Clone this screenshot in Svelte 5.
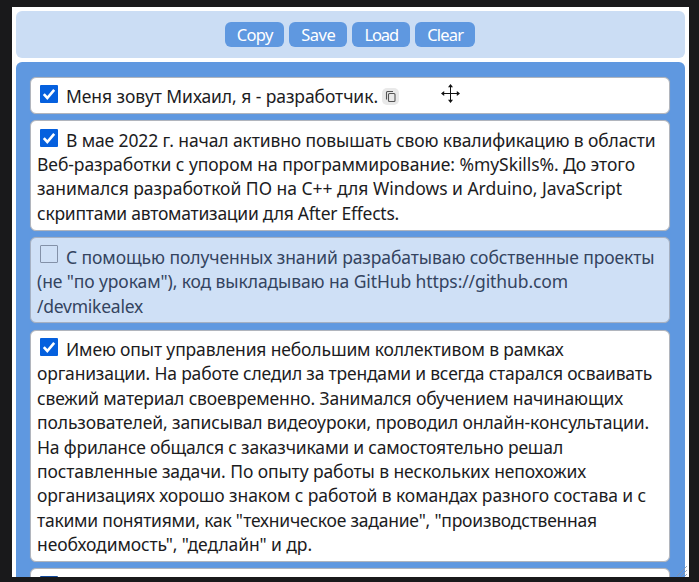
<script>
  const buttons = [
    { label: 'Copy', width: 59, text: 36 },
    { label: 'Save', width: 58, text: 34 },
    { label: 'Load', width: 58, text: 33.5 },
    { label: 'Clear', width: 60, text: 36 }
  ];

  // Each line carries its text and its measure in pixels.
  const items = [
    { checked: true, copy: true, height: 37.4, lines: [['Меня зовут Михаил, я - разработчик.', 312]] },
    {
      checked: true,
      height: 111,
      lines: [
        ['В мае 2022 г. начал активно повышать свою квалификацию в области', 589.5],
        ['Веб-разработки с упором на программирование: %mySkills%. До этого', 598],
        ['занимался разработкой ПО на C++ для Windows и Arduino, JavaScript', 585],
        ['скриптами автоматизации для After Effects.', 362]
      ]
    },
    {
      checked: false,
      height: 86,
      lines: [
        ['С помощью полученных знаний разрабатываю собственные проекты', 588.5],
        ['(не "по урокам"), код выкладываю на GitHub https://github.com', 531],
        ['/devmikealex', 106]
      ]
    },
    {
      checked: true,
      height: 232.5,
      lines: [
        ['Имею опыт управления небольшим коллективом в рамках', 497.5],
        ['организации. На работе следил за трендами и всегда старался осваивать', 615],
        ['свежий материал своевременно. Занимался обучением начинающих', 586],
        ['пользователей, записывал видеоуроки, проводил онлайн-консультации.', 612],
        ['На фрилансе общался с заказчиками и самостоятельно решал', 526],
        ['поставленные задачи. По опыту работы в нескольких непохожих', 549],
        ['организациях хорошо знаком с работой в командах разного состава и с', 609],
        ['такими понятиями, как "техническое задание", "производственная', 560],
        ['необходимость", "дедлайн" и др.', 275]
      ]
    },
    { checked: true, height: 60, lines: [] }
  ];

  function fit(node, width) {
    const natural = node.getBoundingClientRect().width;
    node.style.letterSpacing = `${(width - natural) / node.textContent.length}px`;
  }
</script>

<div class="screen">
  <div class="window">
    <header>
      {#each buttons as b}
        <button style="width: {b.width}px"><span use:fit={b.text}>{b.label}</span></button>
      {/each}
    </header>
    <main>
      {#each items as item}
        <article class:off={!item.checked} style="height: {item.height}px">
          {#if !item.lines.length}
            <div class="line"><span class="box on clipped"></span></div>
          {/if}
          {#each item.lines as [text, width], i}
            <div class="line">
              {#if i === 0}
                <span class="box" class:on={item.checked}>
                  {#if item.checked}
                    <svg viewBox="0 0 18 18"><path d="M3.8 9.2 7.3 13 14.2 4.8" /></svg>
                  {/if}
                </span>
              {/if}
              <span class="text" use:fit={width}>{text}</span>
              {#if item.copy}
                <span class="copy">
                  <svg viewBox="0 0 17 17">
                    <path d="M4.5 11.5V4.5Q4.5 3.5 5.5 3.5H11" />
                    <rect x="6.5" y="5.5" width="6.5" height="8" rx="1" />
                  </svg>
                </span>
              {/if}
            </div>
          {/each}
        </article>
      {/each}
    </main>
    <svg class="grip" viewBox="0 0 12 12"><path d="M1 11 11 1M5 11 11 5M9 11 11 9" /></svg>
  </div>
  <svg class="cursor" viewBox="0 0 20 20">
    <path class="stem" d="M9.5 2V17M2 9.5H17" />
    <path d="M9.5 0 12 3.2H7ZM9.5 19 12 15.8H7ZM0 9.5 3.2 7V12ZM19 9.5 15.8 7V12Z" />
  </svg>
</div>

<style>
  :global(body) {
    margin: 0;
    background: #19191b;
  }
  .screen {
    position: relative;
    box-sizing: border-box;
    width: 699px;
    height: 582px;
    padding: 7px 10px 5px 11.5px;
    overflow: hidden;
    background: #19191b;
    font-family: 'Noto Sans', 'Open Sans', sans-serif;
    color: #1c1c1e;
  }
  .window {
    position: relative;
    box-sizing: border-box;
    height: 570px;
    padding: 4px 4px 0;
    overflow: hidden;
    background: #fff;
  }
  header {
    display: flex;
    justify-content: center;
    align-items: center;
    gap: 5px;
    box-sizing: border-box;
    height: 47px;
    border-radius: 6px;
    background: #cbddf4;
  }
  button {
    display: flex;
    justify-content: center;
    align-items: center;
    height: 25px;
    padding: 1px 0 0;
    border: 0;
    border-radius: 6px;
    background: #5f98e0;
    color: #fff;
    font: 16.5px/24px 'Noto Sans', 'Open Sans', sans-serif;
  }
  main {
    display: flex;
    flex-direction: column;
    gap: 6.2px;
    margin-top: 4px;
    padding: 14.6px 15.2px 15px 14.5px;
    border-radius: 6px 6px 0 0;
    background: #5f98e0;
  }
  article {
    flex: none;
    box-sizing: border-box;
    padding: 6.5px 6px 0;
    border: 1px solid #b1b5bd;
    border-radius: 6px;
    background: #fff;
    box-shadow: 0 0 1px #9aa3b2;
  }
  article.off {
    background: #cfe0f6;
    border-color: #a5b0c2;
    color: #34445f;
  }
  .line {
    display: flex;
    height: 24.4px;
    font-size: 17.5px;
    line-height: 24.4px;
    white-space: pre;
  }
  .box {
    flex: none;
    box-sizing: border-box;
    width: 18px;
    height: 18px;
    margin: 1px 8px 0 3px;
    border: 1.3px solid #8391a8;
    border-radius: 1px;
  }
  .off .box {
    margin-top: 0.4px;
  }
  .box.on {
    border: 0;
    background: #0560de;
  }
  .box.clipped {
    margin-top: 0;
    background: #124a9c;
  }
  .box svg {
    display: block;
    width: 18px;
    height: 18px;
    fill: none;
    stroke: #fff;
    stroke-width: 2.6;
  }
  .copy {
    width: 17px;
    height: 17px;
    margin: 4px 0 0 4px;
    border-radius: 5px;
    background: #e9e9e9;
  }
  .copy svg {
    display: block;
    width: 17px;
    height: 17px;
    fill: none;
    stroke: #555;
    stroke-width: 1.1;
  }
  .cursor {
    position: absolute;
    left: 441px;
    top: 84px;
    width: 20px;
    height: 20px;
    fill: #111;
  }
  .cursor .stem {
    fill: none;
    stroke: #111;
    stroke-width: 1;
  }
  .grip {
    position: absolute;
    right: 1px;
    bottom: 0;
    width: 12px;
    height: 12px;
    fill: none;
    stroke: #8592a6;
    stroke-width: 0.8;
  }
</style>
